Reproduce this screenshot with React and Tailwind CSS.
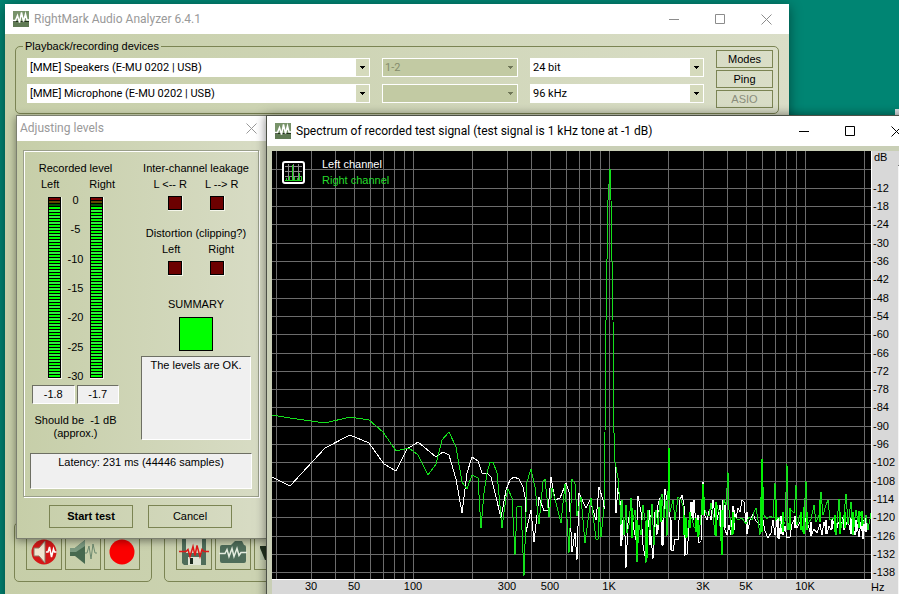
const SPECTRUM_PEAK = '605,433 606,320 608,200 610,169 611,200 613,320 614,433';

const LEFT_CHANNEL =
  '272,477 290,486 325,448 350,435 369,443 384,464 396,471 407,449 418,442 436,457 443,452 449,455 456,479 462,513 467,473 472,457 478,461 482,473 487,473 491,477 495,493 501,518 506,490 510,480 514,477 519,479 523,487 525,497 526,532 531,510 534,542 539,497 544,511 548,510 551,477 555,500 560,498 566,483 569,492 572,552 575,533 577,560 579,493 586,508 590,500 596,520 599,487 603,500 604,510 ' +
  SPECTRUM_PEAK +
  ' 615,462 616,513 618,488 620,500 621,546 623,528 625,536 626,568 628,523 631,505 634,530 637,545 638,496 641,512 643,545 646,562 649,510 651,536 653,559 655,512 657,535 658,505 660,498 662,535 663,546 665,489 667,500 669,482 671,550 673,551 675,539 678,540 680,500 682,495 684,505 685,555 687,554 689,528 691,502 693,520 694,500 696,525 698,515 699,543 701,541 703,482 705,516 707,520 709,511 711,520 713,500 716,525 720,505 721,530 723,500 725,530 727,535 729,525 731,535 733,506 736,518 738,508 740,512 742,500 744,502 747,534 750,520 753,514 756,521 760,525 763,520 765,531 768,538 771,533 773,520 775,535 777,519 779,539 781,518 783,535 785,526 787,538 790,537 792,524 794,520 797,528 800,522 803,530 806,518 809,528 811,536 814,529 817,533 820,524 822,535 824,522 827,534 829,526 831,530 834,521 836,534 838,522 841,527 843,517 846,525 848,519 850,530 852,522 855,535 857,524 859,537 861,522 863,539 865,524 867,530 870,521';

const RIGHT_CHANNEL =
  '272,415 290,418 311,421 325,423 350,417 369,420 383,432 396,451 409,448 418,455 428,475 436,464 442,440 449,432 456,447 462,482 467,489 472,475 478,478 481,528 484,493 487,473 490,462 493,462 497,473 502,528 506,497 508,489 512,498 515,555 517,507 521,506 524,576 527,482 531,469 535,487 539,524 543,482 545,479 549,517 552,488 556,503 561,523 565,484 569,553 572,479 575,484 577,516 581,497 585,543 591,498 596,539 598,539 599,507 601,537 604,508 ' +
  SPECTRUM_PEAK +
  ' 615,462 618,478 620,505 621,525 622,500 624,535 626,505 627,533 629,525 631,498 633,520 635,510 637,562 639,525 641,535 643,505 645,520 646,563 648,510 650,530 652,504 654,545 656,510 658,525 660,500 662,494 664,518 666,500 667,536 669,448 670,512 673,500 675,520 678,497 681,500 683,506 685,525 687,537 689,520 692,518 694,527 697,528 699,535 701,515 703,484 705,510 707,515 709,516 711,503 713,514 715,535 717,505 719,512 722,555 724,500 726,505 728,472 729,510 732,535 735,517 738,520 742,518 746,524 749,517 752,520 754,512 756,508 758,520 760,535 762,459 764,515 767,519 770,516 773,518 775,483 776,520 779,517 782,528 785,522 787,464 788,530 791,510 794,513 796,485 797,525 800,515 803,532 806,481 807,525 811,519 814,505 816,522 819,515 821,492 823,515 826,505 828,500 830,520 834,518 836,535 839,499 841,528 844,515 846,494 848,524 851,502 853,535 856,510 858,522 860,512 863,524 866,515 868,530 871,513';

// bins where the trace is dense enough to read as a solid bar: [x, top, bottom]
const RIGHT_SPIKES = [
  [632, 508, 538], [637, 520, 556], [647, 520, 558], [661, 500, 522], [669, 448, 500], [684, 515, 535],
  [686, 518, 538], [690, 512, 528], [696, 518, 532], [698, 520, 537], [703, 484, 515], [716, 502, 536],
  [722, 510, 555], [733, 512, 534], [762, 459, 532], [776, 500, 520], [783, 512, 532], [790, 508, 530],
  [801, 512, 530], [804, 507, 534], [807, 512, 530], [820, 500, 522], [835, 515, 532], [840, 512, 534],
  [845, 512, 528], [853, 512, 532], [859, 511, 528], [862, 511, 526],
];

const LEFT_SPIKES = [
  [622, 520, 540], [650, 515, 545], [658, 510, 530], [662, 520, 545], [671, 520, 550], [685, 530, 554],
  [692, 502, 516], [725, 505, 528], [734, 510, 530], [747, 512, 534], [778, 518, 538], [781, 516, 534],
  [795, 516, 528], [811, 522, 534], [826, 520, 534], [832, 519, 529], [844, 516, 530], [851, 518, 534],
  [856, 520, 532], [863, 520, 538], [866, 518, 532],
];

const DECADE = 196;
const freqToX = (freq) => Math.round(413 + DECADE * Math.log10(freq / 100));
const dbToY = (db) => Math.round(151 - (db * 18.32) / 6);

const GRID_FREQS = [
  20, 30, 40, 50, 60, 70, 80, 90, 100, 200, 300, 400, 500, 600, 700, 800, 900, 1000, 2000, 3000, 4000, 5000, 6000,
  7000, 8000, 9000, 10000, 20000,
];
const GRID_DBS = Array.from({ length: 23 }, (_, i) => -6 * (i + 1));
const FREQ_LABELS = [
  [30, '30'],
  [50, '50'],
  [100, '100'],
  [300, '300'],
  [500, '500'],
  [1000, '1K'],
  [3000, '3K'],
  [5000, '5K'],
  [10000, '10K'],
];

function AppIcon() {
  return (
    <svg width="16" height="16" viewBox="0 0 16 16" className="shrink-0" aria-hidden="true">
      <rect width="16" height="16" fill="#78936a" />
      <rect y="10" width="16" height="1" fill="#20301c" />
      <rect y="11" width="16" height="5" fill="#5f7a54" />
      <path d="M0 9.5h2.5l2-5 2 7L8.5 1.5l2 9 2-7.5 1.5 6h2" fill="none" stroke="#fff" strokeWidth="1.5" />
    </svg>
  );
}

function CloseButton() {
  return (
    <button type="button" aria-label="Close" className="flex w-[46px] items-center justify-center">
      <svg width="11" height="11" stroke="currentColor">
        <path d="M.5.5l10 10M10.5.5l-10 10" />
      </svg>
    </button>
  );
}

function WindowButtons({ active }) {
  return (
    <div className={`flex self-stretch ${active ? 'text-black' : 'text-[#8c8c8c]'}`}>
      <button type="button" aria-label="Minimize" className="flex w-[46px] items-center justify-center">
        <svg width="10" height="10" stroke="currentColor">
          <path d="M0 5.5h10" />
        </svg>
      </button>
      <button type="button" aria-label="Maximize" className="flex w-[46px] items-center justify-center">
        <svg width="10" height="10" fill="none" stroke="currentColor">
          <path d="M.5.5h9v9h-9z" />
        </svg>
      </button>
      <CloseButton />
    </div>
  );
}

function Select({ label, options, disabled }) {
  return (
    <div className="relative h-[19px]">
      <select
        aria-label={label}
        disabled={disabled}
        className="block h-[19px] w-full appearance-none border border-white bg-white pt-px pr-[16px] pl-[2px] font-[Roboto,sans-serif] text-[11px] leading-normal text-black opacity-100 disabled:bg-[#c2caa3] disabled:text-[#858c6c]"
      >
        {options.map((option) => (
          <option key={option}>{option}</option>
        ))}
      </select>
      <span
        className={`pointer-events-none absolute inset-y-px right-px flex w-[13px] items-center justify-center ${
          disabled ? 'text-[#6f7657]' : 'bg-[#d5dabc] text-black'
        }`}
      >
        <svg width="5" height="3" fill="currentColor" shapeRendering="crispEdges">
          <path d="M0 0h5v1H4v1H3v1H2V2H1V1H0z" />
        </svg>
      </span>
    </div>
  );
}

function FlatButton({ children, className, disabled }) {
  return (
    <button
      type="button"
      disabled={disabled}
      className={`flex items-center justify-center border border-[#7b8453] text-black disabled:text-[#8a8d7c] ${className}`}
    >
      {children}
    </button>
  );
}

function segmentColor(index) {
  if (index === 0) return 'bg-[#7a0000]';
  if (index === 1) return 'bg-[#5c4a00]';
  if (index === 2) return 'bg-[#005a00]';
  return index % 2 ? 'bg-[#00ff00]' : 'bg-[#2cf53a]';
}

function Meter() {
  return (
    <div className="mt-[4px] flex h-[182px] w-[14px] flex-col gap-px border-r border-b border-[#f4f6ea] bg-black p-px pb-0">
      {Array.from({ length: 60 }, (_, i) => (
        <div key={i} className={`h-[2px] ${segmentColor(i)}`} />
      ))}
    </div>
  );
}

function Led() {
  return (
    <div className="h-[15px] w-[15px] border-r border-b border-[#f4f6ea]">
      <div className="h-full w-full border border-black bg-[#6c0000]" />
    </div>
  );
}

function Sunken({ children, className }) {
  return (
    <div
      className={`border border-t-[#6d6f63] border-r-white border-b-white border-l-[#6d6f63] bg-[#f0f0f0] text-center leading-[16px] ${className}`}
    >
      {children}
    </div>
  );
}

function LevelsDialog() {
  return (
    <section className="absolute top-[115px] left-[16px] w-[251px] border border-[#7c8070] bg-linear-to-r from-[#c6cea8] to-[#d8dcc5] shadow-[0_2px_8px_rgba(0,0,0,0.45)]">
      <header className="flex h-[25px] items-stretch justify-between bg-white text-[#999]">
        <h2 className="pl-[3px] font-[Roboto,sans-serif] text-[12px] leading-[24px]">Adjusting levels</h2>
        <div className="-mr-2 flex">
          <CloseButton />
        </div>
      </header>

      <div className="mt-[9px] mr-[7px] ml-[6px] border border-[#9a9f8a] px-[6px] pt-[9px] pb-[7px] shadow-[inset_1px_1px_0_#fff,1px_1px_0_#fff]">
        <div className="flex justify-between">
          <div className="ml-[2px] w-[87px] text-center">
            <p className="leading-[16px]">Recorded level</p>
            <div className="flex justify-between pr-1 pl-[9px] leading-[16px]">
              <span>Left</span>
              <span>Right</span>
            </div>
            <div className="mt-px flex justify-center">
              <Meter />
              <div className="flex h-[190px] w-[28px] flex-col justify-between leading-[14px]">
                {[0, -5, -10, -15, -20, -25, -30].map((db) => (
                  <span key={db}>{db}</span>
                ))}
              </div>
              <Meter />
            </div>
            <div className="mt-[2px] flex gap-[2px]">
              <Sunken className="h-[19px] flex-1">-1.8</Sunken>
              <Sunken className="h-[19px] flex-1">-1.7</Sunken>
            </div>
            <p className="mt-[10px] leading-[13px] whitespace-pre">{'Should be  -1 dB\n(approx.)'}</p>
          </div>

          <div className="mr-px flex w-[110px] flex-col items-center">
            <p className="leading-[16px] whitespace-nowrap">Inter-channel leakage</p>
            <div className="flex gap-[18px] leading-[16px]">
              <span>L &lt;-- R</span>
              <span>L --&gt; R</span>
            </div>
            <div className="mt-[4px] flex gap-[27px]">
              <Led />
              <Led />
            </div>
            <p className="mt-[14px] leading-[16px]">Distortion (clipping?)</p>
            <div className="flex gap-[28px] pl-1 leading-[16px]">
              <span>Left</span>
              <span>Right</span>
            </div>
            <div className="mt-[4px] flex gap-[27px]">
              <Led />
              <Led />
            </div>
            <p className="mt-[20px] leading-[16px]">SUMMARY</p>
            <div className="mt-[5px] h-[34px] w-[34px] border border-black bg-[#00ff00]" />
            <Sunken className="mt-[5px] h-[84px] w-full">The levels are OK.</Sunken>
          </div>
        </div>
        <Sunken className="mt-[13px] h-[36px]">Latency: 231 ms (44446 samples)</Sunken>
      </div>

      <div className="flex gap-[15px] px-[32px] pt-[8px] pb-[10px]">
        <FlatButton className="h-[23px] w-[84px] font-bold">Start test</FlatButton>
        <FlatButton className="h-[23px] w-[84px]">Cancel</FlatButton>
      </div>
    </section>
  );
}

function SpectrumChart() {
  return (
    <svg viewBox="272 151 627 443" className="block h-[443px] w-[627px] shrink-0 text-[11px]" role="img" aria-label="Spectrum">
      <rect x="272" y="151" width="600" height="429" fill="#fff" />
      <rect x="272" y="151" width="599" height="428" fill="#000" />
      <g fill="#6c6c6c" shapeRendering="crispEdges">
        {GRID_FREQS.map((freq) => (
          <rect key={freq} x={freqToX(freq)} y="151" width="1" height="428" />
        ))}
        {GRID_DBS.map((db) => (
          <rect key={db} x="272" y={dbToY(db)} width="599" height="1" />
        ))}
      </g>

      <g fill="none" shapeRendering="crispEdges">
        <polyline points={LEFT_CHANNEL} stroke="#fff" />
        {LEFT_SPIKES.map(([x, top, bottom]) => (
          <path key={x} d={`M${x} ${top}V${bottom}`} stroke="#fff" strokeWidth="2" />
        ))}
        <polyline points={RIGHT_CHANNEL} stroke="#14e01c" />
        {RIGHT_SPIKES.map(([x, top, bottom]) => (
          <path key={x} d={`M${x} ${top}V${bottom}`} stroke="#00f400" strokeWidth="2" />
        ))}
      </g>

      <g fill="none">
        <rect x="283" y="162" width="21" height="21" rx="2" fill="#000" stroke="#fff" strokeWidth="2" />
        <path d="M285 166.5h17M285 171.5h17M285 176.5h17M288.5 164v17M293.5 164v17M298.5 164v17" stroke="#8a8a8a" />
        <path
          d="M285 180.5h17M286.5 181v-3M289.5 181v-5M292.5 181v-16M294.5 181v-4M297.5 181v-3M299.5 181v-8M301.5 181v-5"
          stroke="#1fd21f"
        />
      </g>
      <text x="322" y="168" fill="#fff">
        Left channel
      </text>
      <text x="322" y="184" fill="#26dc2c">
        Right channel
      </text>

      <g fill="#000">
        <text x="874" y="161">
          dB
        </text>
        {GRID_DBS.slice(1).map((db) => (
          <text key={db} x="873" y={dbToY(db) + 4}>
            {db}
          </text>
        ))}
        {FREQ_LABELS.map(([freq, label]) => (
          <text key={label} x={freqToX(freq)} y="590" textAnchor="middle">
            {label}
          </text>
        ))}
        <text x="871" y="591">
          Hz
        </text>
      </g>
      <rect x="898" y="165" width="1" height="429" fill="#f4f4f4" />
      <rect x="898" y="165" width="1" height="1" fill="#777" />
    </svg>
  );
}

function SpectrumWindow() {
  return (
    <section className="absolute top-[115px] -right-[21px] -bottom-[20px] left-[266px] overflow-hidden border border-[#4c5046] bg-[#d8d8d8] shadow-[0_0_10px_rgba(0,0,0,0.5)]">
      <header className="flex h-[30px] items-center bg-white pl-[8px]">
        <AppIcon />
        <h2 className="flex-1 pl-[5px] font-[Roboto,sans-serif] text-[12px] text-black">
          Spectrum of recorded test signal (test signal is 1 kHz tone at -1 dB)
        </h2>
        <WindowButtons active />
      </header>
      <div className="border-t-[5px] border-l-[5px] border-[#c9cfb6]">
        <SpectrumChart />
      </div>
    </section>
  );
}

function ToolButton({ label, children }) {
  return (
    <button type="button" aria-label={label} className="flex h-[37px] w-[36px] items-center justify-center border border-[#7b8453]">
      {children}
    </button>
  );
}

function Toolbar() {
  return (
    <div className="flex gap-[12px]">
      <div className="flex gap-[3px] rounded-[5px] border border-[#7b8453] px-[11px] pt-[10px] pb-[11px]">
        <ToolButton label="Playback test">
          <svg width="26" height="26" viewBox="0 0 26 26">
            <circle cx="13" cy="13" r="12.5" fill="#d51818" />
            <path d="M3 9h5l6-7v22l-6-7H3z" fill="#efe6cf" stroke="#8d7b66" />
            <path d="M15 13h2l1.5-5 2 10 2-8 1 3h2" fill="none" stroke="#fff" strokeWidth="1.5" />
          </svg>
        </ToolButton>
        <ToolButton label="Playback">
          <svg width="28" height="26" viewBox="0 0 28 26">
            <path d="M1 9h5l10-8v24L6 17H1z" fill="#47694f" />
            <path d="M1 9h5l10-8v6L7 13H1z" fill="#7b9a80" />
            <path d="M16 14h2l2-7 2 13 2-15 2 9h2" fill="none" stroke="#6d8a70" />
          </svg>
        </ToolButton>
        <ToolButton label="Record">
          <svg width="26" height="26" viewBox="0 0 26 26">
            <circle cx="13" cy="13" r="12.5" fill="#fb0000" />
          </svg>
        </ToolButton>
      </div>
      <div className="flex flex-1 gap-[3px] rounded-[5px] border border-[#7b8453] px-[11px] pt-[10px] pb-[11px]">
        <ToolButton label="Save test">
          <svg width="30" height="28" viewBox="0 0 30 28">
            <path d="M3 1h24v26H5l-2-2z" fill="#4f6d5a" />
            <path d="M7 1h16v14H7z" fill="#d5dcc3" />
            <path d="M9 19h13v8H9z" fill="#dfe5d6" />
            <path d="M11 20h3v6h-3z" fill="#1c2a20" />
            <path d="M0 13.5h7l2-2 2 7 3-10 2 9 2-10 3 11 2-7 2 2h5" fill="none" stroke="#e01818" strokeWidth="1.5" />
          </svg>
        </ToolButton>
        <ToolButton label="Open test">
          <svg width="28" height="26" viewBox="0 0 28 26">
            <path d="M1 8q0-2 2-2h9l4-4h7l2 4q2 0 2 2v14q0 2-2 2H3q-2 0-2-2z" fill="#4f6d5a" />
            <path d="M0 14.5h6l2-4 2 7 3-8 2 8 3-8 2 7 2-3h6" fill="none" stroke="#e4ecdf" strokeWidth="1.5" />
          </svg>
        </ToolButton>
        <ToolButton label="Results">
          <svg width="26" height="26" viewBox="0 0 26 26">
            <path d="M1 7h24v14H1z" fill="#22331f" />
            <path d="M1 9l5 12H1z" fill="#b9c8ac" />
          </svg>
        </ToolButton>
      </div>
    </div>
  );
}

function MainWindow() {
  return (
    <section className="absolute top-[4px] -bottom-[30px] left-[5px] w-[784px] overflow-hidden bg-linear-to-r from-[#c6cea8] to-[#dadec8] shadow-[0_2px_12px_rgba(0,0,0,0.45)]">
      <header className="flex h-[30px] items-center bg-white pl-[8px] text-[#999]">
        <AppIcon />
        <h1 className="flex-1 pl-[5px] font-[Roboto,sans-serif] text-[12px]">RightMark Audio Analyzer 6.4.1</h1>
        <WindowButtons />
      </header>
      <div className="px-[10px] pt-[5px]">
        <fieldset className="flex h-[75px] justify-between rounded-[5px] border border-[#7b8453] pr-[5px] pl-[11px]">
          <legend className="-ml-[4px] px-[2px] leading-[14px]">Playback/recording devices</legend>
          <div className="grid flex-1 grid-cols-[343px_136px_174px] content-start gap-x-[12px] gap-y-[7px] pt-[5px]">
            <Select label="Playback device" options={['[MME] Speakers (E-MU 0202 | USB)']} />
            <Select label="Playback channels" options={['1-2']} disabled />
            <Select label="Bit depth" options={['24 bit', '16 bit']} />
            <Select label="Recording device" options={['[MME] Microphone (E-MU 0202 | USB)']} />
            <Select label="Recording channels" options={['']} disabled />
            <Select label="Sampling rate" options={['96 kHz', '48 kHz']} />
          </div>
          <div className="-mt-[3px] flex w-[57px] flex-col gap-[2px]">
            <FlatButton className="h-[18px]">Modes</FlatButton>
            <FlatButton className="h-[18px]">Ping</FlatButton>
            <FlatButton className="h-[18px]" disabled>
              ASIO
            </FlatButton>
          </div>
        </fieldset>
      </div>
      <div className="mt-[408px] pr-[10px] pl-[9px]">
        <Toolbar />
      </div>
    </section>
  );
}

export default function App() {
  return (
    <main className="relative h-screen w-full overflow-hidden bg-[#008573] font-['Liberation_Sans',Arial,sans-serif] text-[11px] text-black">
      <div className="absolute top-[109px] right-0 h-[10px] w-[4px] bg-[#dfe3e6]" />
      <MainWindow />
      <LevelsDialog />
      <SpectrumWindow />
    </main>
  );
}
